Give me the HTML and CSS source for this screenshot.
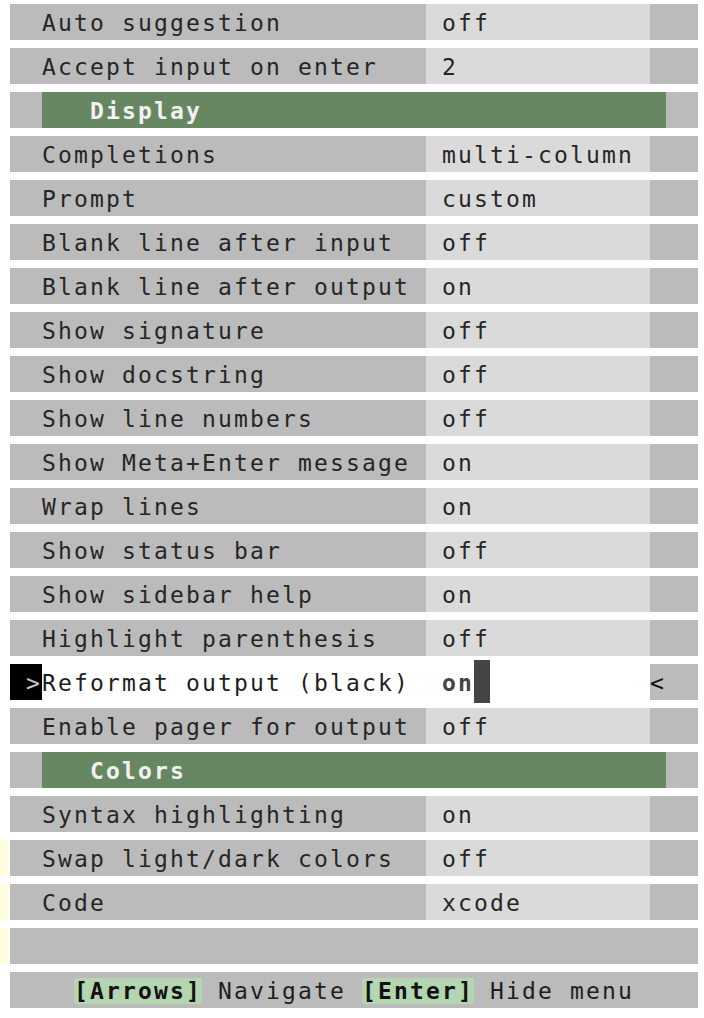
FILE: index.html
```html
<!DOCTYPE html>
<html>
<head>
<meta charset="utf-8">
<link rel="stylesheet" href="styles.css">
</head>
<body>
<div class="menu">
  <div class="row"><div class="gutter"></div><div class="label">Auto suggestion</div><div class="value">off</div><div class="end"></div></div>
  <div class="row"><div class="gutter"></div><div class="label">Accept input on enter</div><div class="value">2</div><div class="end"></div></div>
  <div class="row"><div class="gutter"></div><div class="hpad"></div><div class="htitle">Display</div><div class="hend"></div></div>
  <div class="row"><div class="gutter"></div><div class="label">Completions</div><div class="value">multi-column</div><div class="end"></div></div>
  <div class="row"><div class="gutter"></div><div class="label">Prompt</div><div class="value">custom</div><div class="end"></div></div>
  <div class="row"><div class="gutter"></div><div class="label">Blank line after input</div><div class="value">off</div><div class="end"></div></div>
  <div class="row"><div class="gutter"></div><div class="label">Blank line after output</div><div class="value">on</div><div class="end"></div></div>
  <div class="row"><div class="gutter"></div><div class="label">Show signature</div><div class="value">off</div><div class="end"></div></div>
  <div class="row"><div class="gutter"></div><div class="label">Show docstring</div><div class="value">off</div><div class="end"></div></div>
  <div class="row"><div class="gutter"></div><div class="label">Show line numbers</div><div class="value">off</div><div class="end"></div></div>
  <div class="row"><div class="gutter"></div><div class="label">Show Meta+Enter message</div><div class="value">on</div><div class="end"></div></div>
  <div class="row"><div class="gutter"></div><div class="label">Wrap lines</div><div class="value">on</div><div class="end"></div></div>
  <div class="row"><div class="gutter"></div><div class="label">Show status bar</div><div class="value">off</div><div class="end"></div></div>
  <div class="row"><div class="gutter"></div><div class="label">Show sidebar help</div><div class="value">on</div><div class="end"></div></div>
  <div class="row"><div class="gutter"></div><div class="label">Highlight parenthesis</div><div class="value">off</div><div class="end"></div></div>
  <div class="row selected"><div class="gutter"></div><div class="marker"><span class="arrow">&gt;</span></div><div class="label sel">Reformat output (black)</div><div class="value sel"><span class="curval">on</span><span class="cursor"></span></div><div class="end sel-end">&lt;</div></div>
  <div class="row"><div class="gutter"></div><div class="label">Enable pager for output</div><div class="value">off</div><div class="end"></div></div>
  <div class="row"><div class="gutter"></div><div class="hpad"></div><div class="htitle">Colors</div><div class="hend"></div></div>
  <div class="row"><div class="gutter"></div><div class="label">Syntax highlighting</div><div class="value">on</div><div class="end"></div></div>
  <div class="row"><div class="gutter"><div class="mark"></div></div><div class="label">Swap light/dark colors</div><div class="value">off</div><div class="end"></div></div>
  <div class="row"><div class="gutter"><div class="mark"></div></div><div class="label">Code</div><div class="value">xcode</div><div class="end"></div></div>
  <div class="row"><div class="gutter"><div class="mark"></div></div><div class="blank"></div></div>
  <div class="row"><div class="gutter"></div><div class="footer"><span class="key">[Arrows]</span> Navigate <span class="key">[Enter]</span> Hide menu</div></div>
</div>
</body>
</html>
```

FILE: styles.css
```css
html, body {
  margin: 0;
  padding: 0;
  background: #ffffff;
}

.menu {
  display: flex;
  flex-direction: column;
  gap: 8px;
  padding-top: 4px;
  font-family: "DejaVu Sans Mono", "Liberation Mono", monospace;
  font-size: 23px;
  letter-spacing: 2.15px;
  line-height: 36px;
  color: #262626;
  white-space: pre;
}

.row {
  display: flex;
  height: 36px;
}

.row > div {
  padding-top: 1px;
  box-sizing: border-box;
}

.row > .gutter {
  padding-top: 0;
}

.gutter {
  width: 10px;
  flex: none;
}

.mark {
  width: 8px;
  height: 36px;
  background: #fffde0;
}

.label {
  width: 416px;
  padding-left: 32px;
  background: #bbbbbb;
  flex: none;
  overflow: hidden;
}

.value {
  width: 224px;
  padding-left: 16px;
  background: #dadada;
  flex: none;
  position: relative;
}

.end {
  width: 48px;
  background: #bbbbbb;
  flex: none;
}

.hpad {
  width: 32px;
  background: #bbbbbb;
  flex: none;
}

.htitle {
  width: 624px;
  padding-left: 48px;
  background: #678762;
  color: #f2f2f2;
  font-weight: bold;
  flex: none;
}

.hend {
  width: 32px;
  background: #bbbbbb;
  flex: none;
}

.marker {
  width: 32px;
  background: #000000;
  color: #c8c8c8;
  flex: none;
  display: flex;
  justify-content: flex-end;
}

.arrow {
  width: 16px;
}

.label.sel {
  width: 384px;
  padding-left: 0;
  background: #ffffff;
  color: #1e1e1e;
}

.value.sel {
  background: #ffffff;
}

.curval {
  font-weight: bold;
  color: #444444;
}

.cursor {
  position: absolute;
  left: 48px;
  top: -4px;
  width: 16px;
  height: 43px;
  background: #444444;
}

.sel-end {
  color: #111111;
}

.blank {
  width: 688px;
  background: #bbbbbb;
  flex: none;
}

.footer {
  width: 688px;
  padding-left: 64px;
  background: #bbbbbb;
  color: #1e1e1e;
  flex: none;
}

.key {
  background: #b3d5b0;
  font-weight: bold;
  color: #111111;
}
```
